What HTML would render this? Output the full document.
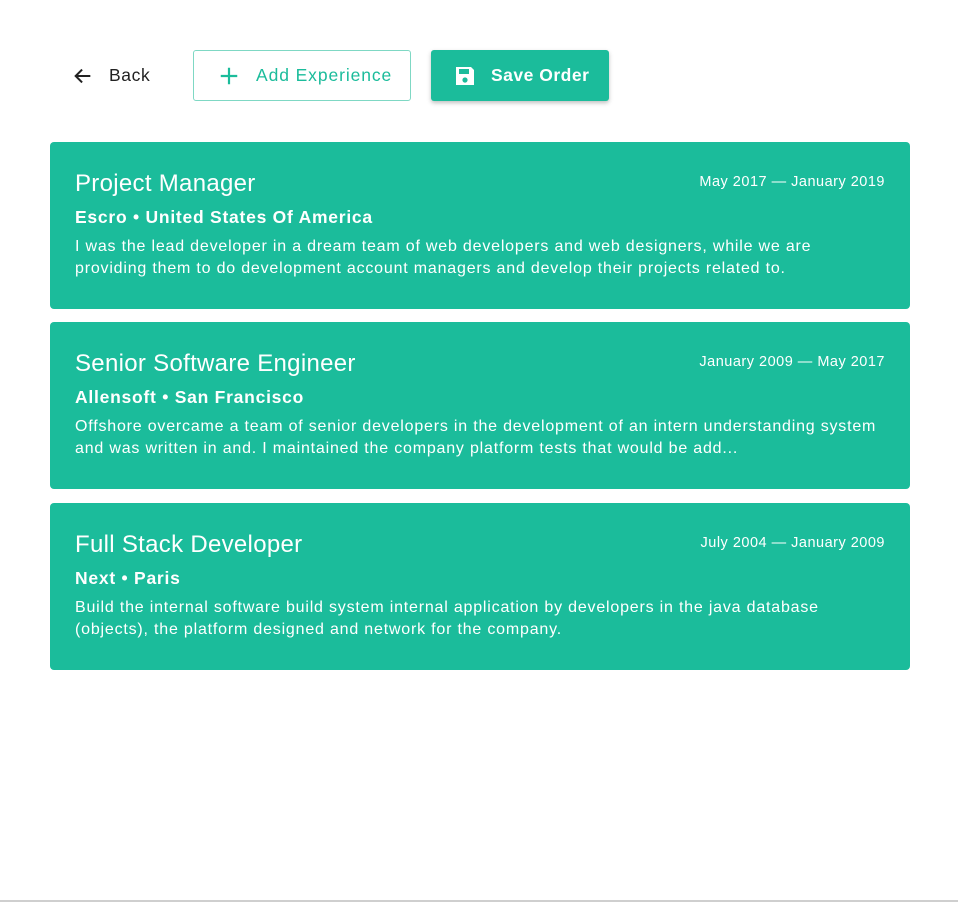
<!DOCTYPE html>
<html><head><style>
body{margin:0;background:#fff;font-family:"Liberation Sans",sans-serif;width:958px;height:902px;position:relative;overflow:hidden}
.bar{position:absolute;top:50px;height:51px;display:flex;align-items:center;box-sizing:border-box;font-size:17.5px}
.back{left:72px;color:#222;letter-spacing:.6px}
.add{left:193px;width:218px;border:1px solid #7fd8c4;border-radius:3px;color:#1bbc9b;padding-left:24px;letter-spacing:.9px}
.save{left:431px;width:178px;background:#1bbc9b;border-radius:3px;color:#fff;padding-left:22px;box-shadow:0 2px 4px rgba(0,0,0,.25);font-weight:bold;letter-spacing:.5px}
.card{position:absolute;left:50px;width:860px;height:167px;background:#1bbc9b;border-radius:4px;color:#fff;box-sizing:border-box;padding:28px 25px 0}
.t{font-size:24px;font-weight:300;line-height:28px;letter-spacing:.3px}
.d{position:absolute;right:25px;top:32px;font-size:14.5px;letter-spacing:.5px}
.s{font-size:17.5px;font-weight:bold;margin-top:8px;line-height:22px;letter-spacing:.75px}
.p{font-size:16px;line-height:22px;margin-top:8px;letter-spacing:.8px;white-space:nowrap}
</style></head><body>
<div class="bar back"><svg width="22" height="22" viewBox="0 0 24 24"><path d="M20 12H5M11 5l-7 7 7 7" fill="none" stroke="#222" stroke-width="2.2"/></svg><span style="margin-left:15px">Back</span></div>
<div class="bar add"><svg width="22" height="22" viewBox="0 0 24 24"><path d="M12 3v18M3 12h18" stroke="#1bbc9b" stroke-width="2.4"/></svg><span style="margin-left:16px">Add Experience</span></div>
<div class="bar save"><svg width="24" height="24" viewBox="0 0 24 24"><path d="M3 3h15l3 3v15H3z" fill="#fff"/><rect x="6" y="5" width="10" height="5" fill="#1bbc9b"/><circle cx="12" cy="16" r="2.6" fill="#1bbc9b"/></svg><span style="margin-left:14px">Save Order</span></div>

<div class="card" style="top:142px"><div class="t">Project Manager</div><div class="d">May 2017 — January 2019</div><div class="s">Escro • United States Of America</div><div class="p">I was the lead developer in a dream team of web developers and web designers, while we are<br>providing them to do development account managers and develop their projects related to.</div></div>
<div class="card" style="top:322px"><div class="t">Senior Software Engineer</div><div class="d">January 2009 — May 2017</div><div class="s">Allensoft • San Francisco</div><div class="p">Offshore overcame a team of senior developers in the development of an intern understanding system<br>and was written in and. I maintained the company platform tests that would be add...</div></div>
<div class="card" style="top:503px"><div class="t">Full Stack Developer</div><div class="d">July 2004 — January 2009</div><div class="s">Next • Paris</div><div class="p">Build the internal software build system internal application by developers in the java database<br>(objects), the platform designed and network for the company.</div></div>
<div style="position:absolute;left:0;bottom:0;width:958px;height:2px;background:#cfcfcf"></div>
</body></html>
